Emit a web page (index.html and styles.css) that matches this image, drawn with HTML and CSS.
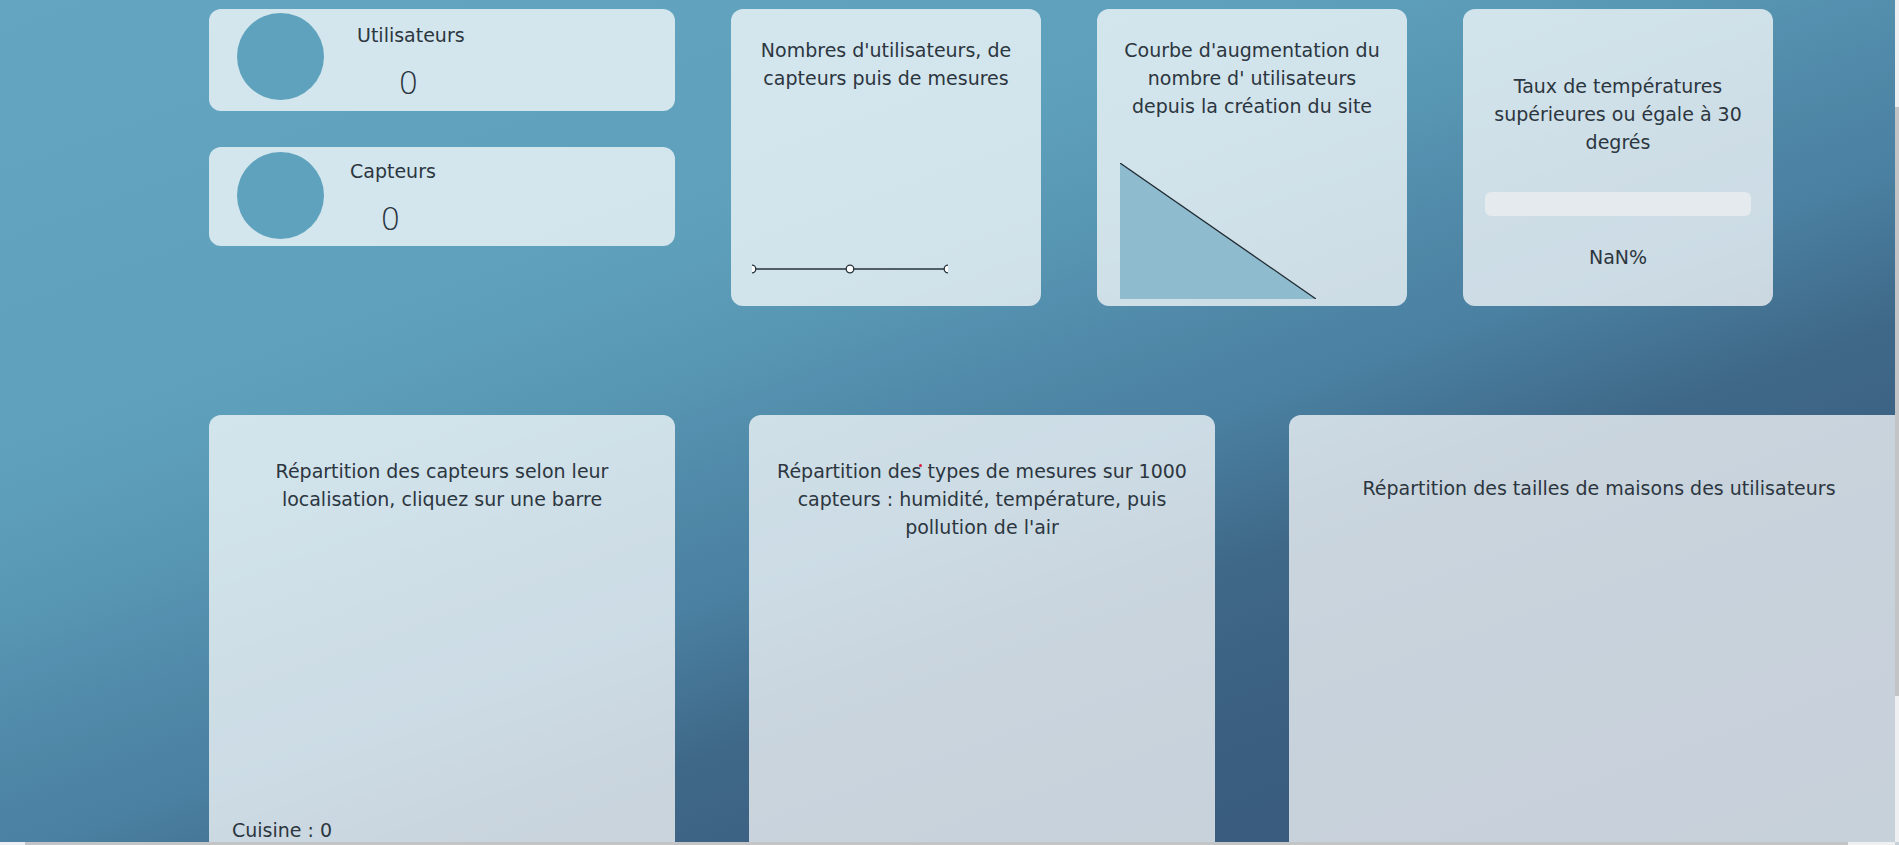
FILE: index.html
```html
<!DOCTYPE html>
<html>
  <head>
    <title>Tableau de bord</title>
    <link rel="stylesheet" href="styles.css">
  </head>
  <body>
    <div class="page">
      <div class="top-row">
        <div class="counters">
          <div class="counter-card">
            <div class="circle"></div>
            <div class="counter-text">
              <div class="counter-label">Utilisateurs</div>
              <div class="counter-value">0</div>
            </div>
          </div>

          <div class="counter-card counter-card-short">
            <div class="circle"></div>
            <div class="counter-text counter-text-tight">
              <div class="counter-label">Capteurs</div>
              <div class="counter-value">0</div>
            </div>
          </div>
        </div>

        <div class="card small-card">
          <p class="card-title">Nombres d'utilisateurs, de capteurs puis de mesures</p>
          <svg class="line-chart" width="196" height="12" viewBox="0 0 196 12">
            <line x1="0" y1="6" x2="196" y2="6" stroke="#26323a" stroke-width="1.3" />
            <circle cx="0" cy="6" r="3.8" fill="#fff" stroke="#26323a" stroke-width="1.3" />
            <circle cx="98" cy="6" r="3.8" fill="#fff" stroke="#26323a" stroke-width="1.3" />
            <circle cx="196" cy="6" r="3.8" fill="#fff" stroke="#26323a" stroke-width="1.3" />
          </svg>
        </div>

        <div class="card small-card">
          <p class="card-title">Courbe d'augmentation du nombre d' utilisateurs depuis la création du site</p>
          <svg class="area-chart" width="196" height="136" viewBox="0 0 196 136">
            <polygon points="0,0 0,136 196,136" fill="#8fbbcf" />
            <line x1="0" y1="0" x2="196" y2="136" stroke="#1f2a31" stroke-width="1.3" />
          </svg>
        </div>

        <div class="card small-card temp-card">
          <p class="card-title">Taux de températures supérieures ou égale à 30 degrés</p>
          <div class="progress"></div>
          <p class="card-title percent">NaN%</p>
        </div>
      </div>

      <div class="bottom-row">
        <div class="card big-card">
          <p class="card-title">Répartition des capteurs selon leur localisation, cliquez sur une barre</p>
          <div class="bar-area"></div>
          <div class="legend">Cuisine : 0</div>
        </div>

        <div class="card big-card">
          <span class="red-dot"></span>
          <p class="card-title">Répartition des types de mesures sur 1000 capteurs : humidité, température, puis pollution de l'air</p>
        </div>

        <div class="card big-card wide-card">
          <p class="card-title">Répartition des tailles de maisons des utilisateurs</p>
        </div>
      </div>
    </div>

    <div class="scrollbar-v"><div class="thumb"></div></div>
    <div class="scrollbar-h"><div class="thumb"></div></div>
  </body>
</html>
```

FILE: styles.css
```css
body {
  margin: 0;
  font-family: "DejaVu Sans", sans-serif;
  color: #2c3640;
}

.page {
  height: 845px;
  overflow: hidden;
  box-sizing: border-box;
  padding: 9px 0 0 209px;
  background: linear-gradient(160deg, #64a6c1 0%, #5fa1bc 30%, #5897b4 40%, #4f87a7 50%, #4a80a1 56%, #3f6888 66%, #3a5e80 78%, #385a7b 100%);
}

.top-row {
  display: flex;
  align-items: flex-start;
  gap: 56px;
}

.counters {
  display: flex;
  flex-direction: column;
  gap: 36px;
  width: 466px;
  flex-shrink: 0;
}

.counter-card {
  display: flex;
  align-items: flex-start;
  height: 102px;
  box-sizing: border-box;
  padding: 4px 0 0 28px;
  border-radius: 12px;
  background-color: rgba(255, 255, 255, 0.72);
}

.counter-card-short {
  height: 99px;
  padding-top: 5px;
}

.circle {
  width: 87px;
  height: 87px;
  border-radius: 50%;
  background-color: #5fa2be;
  flex-shrink: 0;
}

.counter-text {
  margin-left: 33px;
  padding-top: 8px;
  text-align: center;
}

.counter-text-tight {
  margin-left: 26px;
  padding-top: 5px;
}

.counter-label {
  font-size: 19px;
  line-height: 28px;
}

.counter-value {
  margin-top: 14px;
  margin-right: 5px;
  font-size: 32px;
  font-weight: 200;
  line-height: 40px;
}

.card {
  position: relative;
  box-sizing: border-box;
  border-radius: 12px;
  background-color: rgba(255, 255, 255, 0.72);
  flex-shrink: 0;
}

.card-title {
  margin: 0;
  font-size: 19px;
  line-height: 28px;
  text-align: center;
}

.small-card {
  width: 310px;
  height: 297px;
  padding: 27px 18px 0;
}

.line-chart {
  display: block;
  margin: 171px 0 0 3px;
}

.area-chart {
  display: block;
  margin: 43px 0 0 5px;
}

.temp-card {
  padding-top: 63px;
}

.progress {
  width: 266px;
  height: 24px;
  margin: 36px auto 0;
  border-radius: 6px;
  background-color: #e5eaee;
}

.percent {
  margin-top: 27px;
}

.bottom-row {
  display: flex;
  gap: 74px;
  margin-top: 109px;
}

.big-card {
  width: 466px;
  height: 520px;
  padding: 42px 20px 0;
}

.wide-card {
  width: 620px;
  padding-top: 59px;
}

.bar-area {
  height: 303px;
}

.legend {
  margin-left: 3px;
  font-size: 19px;
  line-height: 28px;
}

.red-dot {
  position: absolute;
  left: 170px;
  top: 49px;
  width: 3px;
  height: 3px;
  border-radius: 50%;
  background-color: #d81b3c;
}

.scrollbar-v {
  position: fixed;
  top: 0;
  right: 0;
  width: 4px;
  height: 842px;
  background-color: #eef0f2;
}

.scrollbar-v .thumb {
  margin-top: 107px;
  height: 589px;
  background-color: #c2c4c6;
}

.scrollbar-h {
  position: fixed;
  left: 0;
  bottom: 0;
  width: 1895px;
  height: 3px;
  background-color: #eef0f2;
}

.scrollbar-h .thumb {
  margin-left: 25px;
  width: 1823px;
  height: 3px;
  background-color: #c2c4c6;
}
```
